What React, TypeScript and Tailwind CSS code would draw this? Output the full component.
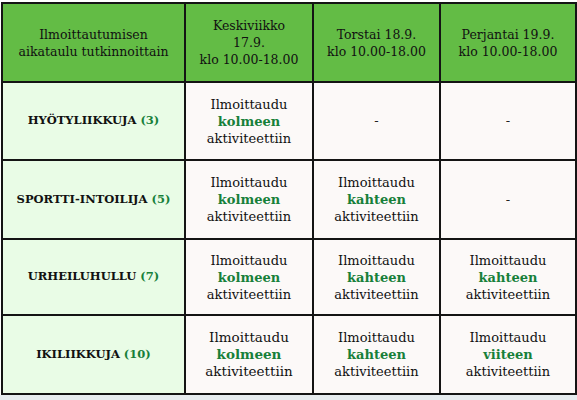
import React from "react";

const G = "text-[#17803a]";

function Cell({ green, big }: { green?: string; big?: boolean }) {
  if (!green) {
    return (
      <div className="bg-[#fcf9f8] flex items-center justify-center text-[13px] text-[#222]">-</div>
    );
  }
  return (
    <div
      className={`bg-[#fcf9f8] flex flex-col items-center justify-center text-center text-[#111] ${
        big ? "text-[13.5px] leading-[17px]" : "text-[13px] leading-[17px]"
      }`}
    >
      <span>Ilmoittaudu</span>
      <span className={`${G} font-bold`}>{green}</span>
      <span>aktiviteettiin</span>
    </div>
  );
}

function Label({ name, n }: { name: string; n: string }) {
  return (
    <div className="bg-[#e9fce6] flex items-center justify-center text-[11.5px] font-bold text-[#111]">
      <span>
        {name} <span className={G}>({n})</span>
      </span>
    </div>
  );
}

export default function App() {
  return (
    <div className="w-[577px] h-[400px] bg-white" style={{ fontFamily: '"DejaVu Serif", "Liberation Serif", serif' }}>
      <div className="pt-[2px] pl-[1px]">
        <div className="grid grid-cols-[181px_126px_125px_134px] grid-rows-[77px_76px_77px_74px_77px] gap-[2px] bg-[#141414] p-[2px] w-[576px]">
          <div className="bg-[#63bc45] flex items-center justify-center text-center text-[12.5px] leading-[17px] text-[#111]">
            <span>
              Ilmoittautumisen
              <br />
              aikataulu tutkinnoittain
            </span>
          </div>
          <div className="bg-[#63bc45] flex items-center justify-center text-center text-[12.5px] leading-[17px] text-[#111]">
            <span>
              Keskiviikko
              <br />
              17.9.
              <br />
              klo 10.00-18.00
            </span>
          </div>
          <div className="bg-[#63bc45] flex items-center justify-center text-center text-[12.5px] leading-[17px] text-[#111]">
            <span>
              Torstai 18.9.
              <br />
              klo 10.00-18.00
            </span>
          </div>
          <div className="bg-[#63bc45] flex items-center justify-center text-center text-[12.5px] leading-[17px] text-[#111]">
            <span>
              Perjantai 19.9.
              <br />
              klo 10.00-18.00
            </span>
          </div>

          <Label name="HYÖTYLIIKKUJA" n="3" />
          <Cell green="kolmeen" />
          <Cell />
          <Cell />

          <Label name="SPORTTI-INTOILIJA" n="5" />
          <Cell green="kolmeen" />
          <Cell green="kahteen" />
          <Cell />

          <Label name="URHEILUHULLU" n="7" />
          <Cell green="kolmeen" />
          <Cell green="kahteen" />
          <Cell green="kahteen" />

          <Label name="IKILIIKKUJA" n="10" />
          <Cell green="kolmeen" big />
          <Cell green="kahteen" />
          <Cell green="viiteen" />
        </div>
      </div>
      <div className="h-[5px] bg-[#e6ecef]" />
    </div>
  );
}
